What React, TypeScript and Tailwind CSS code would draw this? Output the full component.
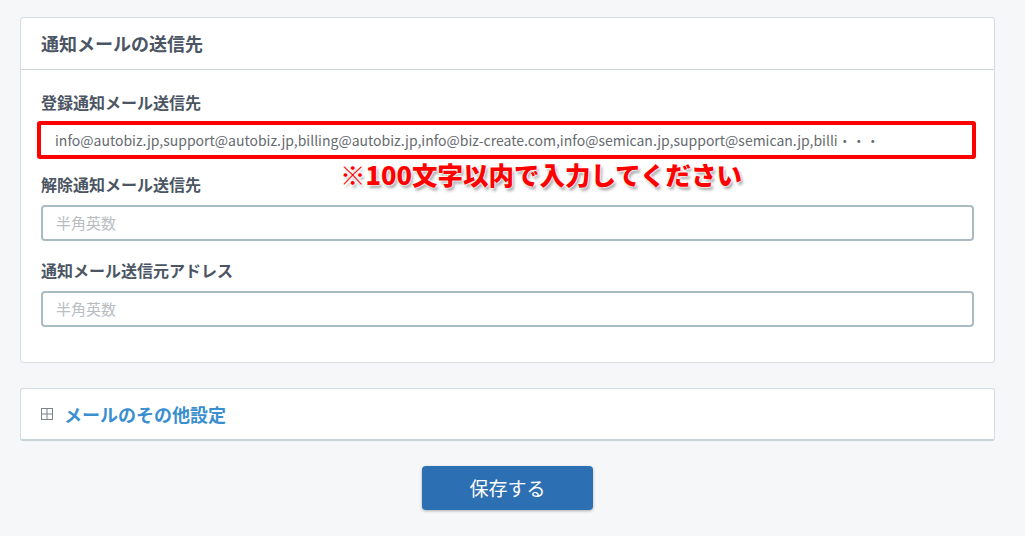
import React from 'react';

const FONT = { fontFamily: '"Noto Sans CJK JP", "Noto Sans", sans-serif' };

const Field = ({ label, placeholder }: { label: string; placeholder: string }) => (
  <div>
    <p className="text-[16px] font-bold text-[#4b5563] leading-[20px] mb-[11px]">{label}</p>
    <div className="h-[36px] border-2 border-[#a9bcc4] rounded-[4px] bg-white flex items-center px-[13px]">
      <span className="text-[15px] text-[#b9bdc2]">{placeholder}</span>
    </div>
  </div>
);

export default function App() {
  return (
    <div className="min-h-[536px] bg-[#f6f7f9] pt-[17px] pl-[20px]" style={FONT}>
      <div className="w-[975px] bg-white border border-[#d3dde2] rounded-[3px]">
        <div className="h-[52px] border-b border-[#cdd6da] flex items-center px-[20px]">
          <h2 className="text-[18px] font-bold text-[#4b5563]">通知メールの送信先</h2>
        </div>
        <div className="px-[20px] pt-[22px] pb-[35px]">
          <p className="text-[16px] font-bold text-[#4b5563] leading-[20px] mb-[9px]">登録通知メール送信先</p>
          <div className="relative">
            <div className="-mx-[4px] border-[4px] border-[#ff0000] rounded-[3px] bg-white h-[38px] flex items-center px-[14px] w-[939px]">
              <span className="text-[14px] text-[#666b70] whitespace-nowrap">
                info@autobiz.jp,support@autobiz.jp,billing@autobiz.jp,info@biz-create.com,info@semican.jp,support@semican.jp,billi・・・
              </span>
            </div>
            <p
              className="absolute left-[299px] top-[37px] text-[25.5px] font-black text-[#ff0000] leading-[32px] whitespace-nowrap"
              style={{ textShadow: '0 0 2px #fff, 0 0 2px #fff, 0 0 2px #fff, 2px 3px 3px rgba(0,0,0,0.35)' }}
            >
              ※100文字以内で入力してください
            </p>
          </div>
          <div className="mt-[15px] flex flex-col gap-[19px]">
            <Field label="解除通知メール送信先" placeholder="半角英数" />
            <Field label="通知メール送信元アドレス" placeholder="半角英数" />
          </div>
        </div>
      </div>

      <div className="mt-[25px] w-[975px] h-[53px] bg-white border border-[#d3dde2] border-b-2 border-b-[#c9d4d9] rounded-[3px] flex items-center px-[20px]">
        <svg width="12" height="12" viewBox="0 0 12 12" className="mr-[11px]">
          <rect x="0.5" y="0.5" width="11" height="11" fill="none" stroke="#7b838c" strokeWidth="1" />
          <line x1="6" y1="0.5" x2="6" y2="11.5" stroke="#7b838c" strokeWidth="1" />
          <line x1="0.5" y1="6" x2="11.5" y2="6" stroke="#7b838c" strokeWidth="1" />
        </svg>
        <span className="text-[18px] font-bold text-[#3a8fcf]">メールのその他設定</span>
      </div>

      <div className="w-[975px] flex justify-center mt-[25px]">
        <button className="w-[171px] h-[44px] bg-[#2d6fb3] rounded-[4px] text-white text-[19px] shadow-[0_1px_3px_rgba(0,0,0,0.3)]">
          保存する
        </button>
      </div>
    </div>
  );
}
